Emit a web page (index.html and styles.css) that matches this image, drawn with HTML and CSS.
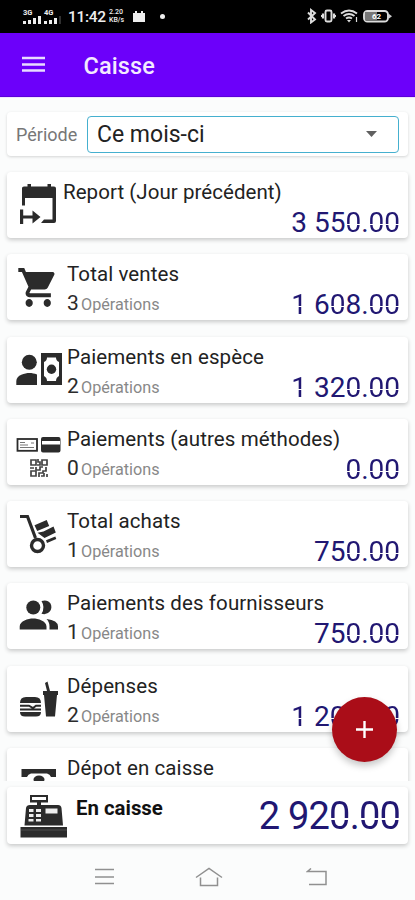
FILE: index.html
```html
<!DOCTYPE html>
<html lang="fr">
<head>
<meta charset="utf-8">
<title>Caisse</title>
<link rel="stylesheet" href="styles.css">
</head>
<body>
<div class="status">
  <div class="signals">
    <div class="signal"><span>3G</span><svg width="18" height="8" viewBox="0 0 18 8"><path d="M0 5h3v3H0zM5 4h3v4H5zM10 2h3v6h-3zM15 0h3v8h-3z"/></svg></div>
    <div class="signal"><span>4G</span><svg width="18" height="8" viewBox="0 0 18 8"><path d="M0 5h3v3H0zM5 4h3v4H5zM10 2h3v6h-3z"/><path d="M15 0h2v8h-2z" opacity=".2"/></svg></div>
  </div>
  <span class="clock">11:42</span>
  <div class="speed"><span>2.20</span><span>KB/s</span></div>
  <svg class="note" width="14" height="11" viewBox="0 0 14 11"><path d="M1 2h2V0h2v2h4V0h2v2h2v9H1z"/></svg>
  <i class="dot"></i>
  <svg class="sys" width="88" height="16" viewBox="0 0 88 16"><g fill="none" stroke="#ddd" stroke-width="1.900"><path d="M3 4.500l7 7-4 3V2l4 3-7 6.500"/><rect x="20.500" y="2.500" width="6" height="11" rx="1.500"/><path d="M18 5.500v5M29 5.500v5M16 8h1M30 8h1" stroke-width="2.200"/><path d="M36 5.500q8-6 16 0M38.500 8q5.500-4 11 0M41 10.500q3-2 6 0"/><path d="M51.500 9v5" stroke-width="1.200"/><rect x="59" y="3" width="24" height="10.500" rx="3.500"/></g><path d="M42 12h4l-2 2.500z" fill="#ddd"/><path d="M60 4h12v8.500H60z" fill="#777"/><path d="M84 6l3 2.200L84 10.500z" fill="#ccc"/><text x="67" y="11.400">62</text></svg>
</div>
<header class="bar">
  <svg width="23" height="17" viewBox="0 0 23 17"><path d="M0 2h23M0 8.500h23M0 14.500h23" stroke="#e8dcff" stroke-width="2.600"/></svg>
  <h1>Caisse</h1>
</header>
<main>
  <section class="card period">
    <label>Période</label>
    <div class="select"><span>Ce mois-ci</span><svg width="11" height="6" viewBox="0 0 11 6"><path d="M0 0h11L5.500 6z" fill="#606060"/></svg></div>
  </section>
  <div class="list">
    <section class="card row report">
      <svg class="icon" viewBox="0 0 60 66"><path d="M15 16q0-1.500 2-1.500h3.500V12H24v2.500h16.500V12H44v2.500h3q2 0 2 2V49q0 2-2 2H34l3-3.500h8.500V26H18v7.500h-3zM13 37.500h3.200v6H25.500V38.500l8 6.500-8 6.500v-5H16.200V52H13z"/></svg>
      <div class="body"><h2>Report (Jour précédent)</h2><p class="amount">3 55<i>0</i>.<i>00</i></p></div>
    </section>
    <section class="card row">
      <svg class="icon" viewBox="0 0 60 66"><path transform="translate(9.500 10.200) scale(1.810 1.940)" d="M7 18c-1.100 0-1.990.9-1.990 2S5.900 22 7 22s2-.9 2-2-.9-2-2-2zM1 2v2h2l3.600 7.590-1.350 2.450c-.16.28-.25.61-.25.960 0 1.100.9 2 2 2h12v-2H7.420c-.14 0-.25-.11-.25-.25l.03-.12.9-1.630h7.450c.75 0 1.410-.41 1.750-1.030l3.580-6.490C21.250 4.820 20.760 4 20 4H5.210l-.94-2H1zm16 16c-1.100 0-1.990.9-1.990 2s.89 2 1.990 2 2-.9 2-2-.9-2-2-2z"/></svg>
      <div class="body"><h2>Total ventes</h2><p class="ops"><b>3</b>Opérations</p><p class="amount"><i>1</i> 6<i>0</i>8.<i>00</i></p></div>
    </section>
    <section class="card row">
      <svg class="icon" viewBox="0 0 60 66"><circle cx="22.300" cy="25.300" r="7.500"/><path d="M9.300 48v-4c0-6 9-8 13-8 3 0 5 .5 7.700 1.500V48z"/><path fill-rule="evenodd" d="M34 16h21v32H34zM40 20.500q0 3-3 4.500v14q3 1.500 3 5h9q0-3.500 3-5V25q-3-1.500-3-4.500z"/><circle cx="44.500" cy="32.300" r="4.700"/></svg>
      <div class="body"><h2>Paiements en espèce</h2><p class="ops"><b>2</b>Opérations</p><p class="amount"><i>1</i> 32<i>0</i>.<i>00</i></p></div>
    </section>
    <section class="card row">
      <svg class="icon" viewBox="0 0 60 66"><rect x="10.500" y="20" width="19.500" height="11.800" fill="#fff" stroke="#2b2b2b" stroke-width="1.800"/><path d="M13 23.500h5M13 26h8M13 28.500h14M24 24h3" stroke="#777" stroke-width="1.100"/><path fill-rule="evenodd" d="M36 18h15.500q2 0 2 2v11.500q0 2-2 2H36q-2 0-2-2V20q0-2 2-2zM35 22v3.500h18V22z"/><g fill="none" stroke="#444" stroke-width="1.700"><path d="M24 41h5v5h-5zM35 41h5v5h-5zM24 52h5v5h-5z"/><path d="M31 40v3h2v3h-3M23 49h4M29 48v3h4v-3h3M39 48v4h-3v2h-4v4M34 57h3v-3M40 55v3"/></g></svg>
      <div class="body"><h2>Paiements (autres méthodes)</h2><p class="ops"><b>0</b>Opérations</p><p class="amount"><i>0</i>.<i>00</i></p></div>
    </section>
    <section class="card row">
      <svg class="icon" viewBox="0 0 60 66"><path d="M13 15.500h7.500L28.500 37" fill="none" stroke="#2b2b2b" stroke-width="3.200"/><circle cx="30.500" cy="44.500" r="6" fill="none" stroke="#2b2b2b" stroke-width="3.400"/><path d="M27.500 24.200L39.700 19l2.500 6-12 5zM30.500 31.700l6-1.300 10-5 2.300 6L37.500 37zM39 39.200l9.300-3.800 1 2.700-9.300 4z"/></svg>
      <div class="body"><h2>Total achats</h2><p class="ops"><b>1</b>Opérations</p><p class="amount">75<i>0</i>.<i>00</i></p></div>
    </section>
    <section class="card row">
      <svg class="icon" viewBox="0 0 60 66"><circle cx="26.300" cy="24.500" r="7"/><path d="M34.500 18q6-1.800 9 2.500 2 4-.5 7.800-3 4-8.500 2.500 4-6.300 0-12.800zM12.700 46.500v-3c0-5.500 8.500-8 13.400-8s13.400 2.500 13.400 8v3zM39.500 36q11.500 1.300 11.500 7.500v3h-8.500v-3q0-4.500-3-7.500z"/></svg>
      <div class="body"><h2>Paiements des fournisseurs</h2><p class="ops"><b>1</b>Opérations</p><p class="amount">75<i>0</i>.<i>00</i></p></div>
    </section>
    <section class="card row">
      <svg class="icon" viewBox="0 0 60 66"><path d="M13 37q0-6 6-6h9q6 0 6 6zM13 46h21q0 4.500-5 4.500H18q-5 0-5-4.500zM38 17l2.500-1.500L43 25h8v4h-1l-2 21.500h-9L37 29h-1v-4h4z"/><path d="M13 39.700h9l4 2.300 3-2.300h5M13 43.500h21" fill="none" stroke="#2b2b2b" stroke-width="2"/></svg>
      <div class="body"><h2>Dépenses</h2><p class="ops"><b>2</b>Opérations</p><p class="amount"><i>1</i> 2<i>00</i>.<i>00</i></p></div>
    </section>
    <section class="card row">
      <svg class="icon" viewBox="0 0 60 66"><path d="M14.500 21H49v8h-5q-1-3-4-3.500H24q-3 .5-4 3.500h-5.500z"/><ellipse cx="32" cy="31.500" rx="5.500" ry="4"/></svg>
      <div class="body"><h2>Dépot en caisse</h2></div>
    </section>
  </div>
  <section class="card total">
    <svg class="icon" viewBox="0 0 60 57"><path fill-rule="evenodd" d="M23 8h18v7.500h-7V18h17q3 0 3.500 3l1.500 17.500H17.500L19 21q.5-3 4-3h7v-2.500h-7zM25 10v3h14v-3zM13.500 40H60v10.500H13.500z"/><path d="M22 22h4.500v3H22zM29 22h5v3h-5zM22 27h4.500v3H22zM29 27h5v3h-5zM21.500 32h5v2.500h-5zM29 32h5v2.500h-5zM38.500 21.500h12v5h-12z" fill="#eee"/><path d="M14 43h46" stroke="#555" stroke-width=".8"/></svg>
    <h2>En caisse</h2>
    <p class="amount">2 92<i>0</i>.<i>00</i></p>
  </section>
</main>
<button class="fab" aria-label="Ajouter"><svg width="17" height="17" viewBox="0 0 17 17"><path d="M8.500 0v17M0 8.500h17" stroke="#fff" stroke-width="2.400"/></svg></button>
<nav class="nav">
  <svg width="20" height="18" viewBox="0 0 20 18"><path d="M0 1.500h19M0 9h19M0 15.500h19"/></svg>
  <svg width="28" height="20" viewBox="0 0 28 20"><path d="M1 10.500L14 1.500l13 9M5.500 10.500v8h17v-8"/></svg>
  <svg width="22" height="18" viewBox="0 0 22 18"><path d="M5 .5L1.500 3.500H20v13H3"/></svg>
</nav>
</body>
</html>
```
FILE: styles.css
```css
* { box-sizing: border-box; }
body {
  margin: 0;
  height: 900px;
  overflow: hidden;
  display: flex;
  flex-direction: column;
  background: #fbfcfc;
  color: #222;
  font-family: Roboto, "Liberation Sans", sans-serif;
}
h1, h2, p { margin: 0; font-weight: 400; }
svg { display: block; flex: none; }

.status {
  height: 32.500px;
  flex: none;
  display: flex;
  align-items: center;
  padding: 0 26px 0 23px;
  background: #000;
  color: #eee;
  fill: #eee;
}
.signals { display: flex; gap: 3px; }
.signal span { display: block; font-size: 7.500px; font-weight: 700; line-height: 7px; }
.clock { margin-left: 6px; width: 38px; font-size: 15.500px; font-weight: 500; letter-spacing: -.3px; padding-top: 2px; }
.speed { margin-left: 3px; width: 18px; font-size: 7px; line-height: 8.500px; font-weight: 500; }
.speed span { display: block; }
.note { margin-left: 5px; }
.dot { width: 5px; height: 5px; margin-left: 14px; border-radius: 50%; background: #eee; }
.sys { margin-left: auto; margin-right: -4px; }
.sys text { font-size: 8px; font-weight: 700; fill: #fff; }

.bar {
  height: 64.500px;
  flex: none;
  display: flex;
  align-items: center;
  gap: 39px;
  padding-left: 21.500px;
  background: #6c00fa;
  border-bottom: 1px solid #5a00d8;
}
.bar h1 { color: #f3eaff; font-size: 23.500px; font-weight: 500; padding-top: 3px; letter-spacing: .1px; }

main { height: 753px; flex: none; padding: 14px 7px 0; border-top: 1px solid #f0e2ff; }
.card {
  background: #fff;
  border-radius: 4px;
  box-shadow: 0 2px 4px rgba(0, 0, 0, .2);
}
.period { height: 44px; display: flex; align-items: center; padding: 0 9px; box-shadow: 0 1px 3px rgba(0, 0, 0, .16); }
.period label { width: 71px; font-size: 18px; color: #777; }
.select {
  flex: 1;
  height: 37px;
  display: flex;
  align-items: center;
  justify-content: space-between;
  padding: 0 21px 0 9px;
  border: 1.500px solid #45b0cf;
  border-radius: 4px;
  font-size: 23px;
}
.list {
  height: 625px;
  margin: 0 -7px;
  padding: 16px 7px 0;
  overflow: hidden;
  display: flex;
  flex-direction: column;
  gap: 16.300px;
}
.row { height: 66px; flex: none; display: flex; }
.icon { width: 60px; height: 66px; fill: #2b2b2b; }
.body {
  flex: 1;
  display: grid;
  grid-template: 36px 30px / auto 1fr;
  padding-right: 8px;
}
.body h2 { grid-column: 1 / 3; font-size: 20.500px; line-height: 24px; padding-top: 8px; letter-spacing: .1px; white-space: nowrap; }
.ops { font-size: 16.200px; line-height: 26px; color: #888; }
.ops b { display: inline-block; width: 14px; font-size: 21px; font-weight: 400; color: #2b2b2b; }
.amount {
  grid-column: 2;
  text-align: right;
  font-size: 28px;
  line-height: 29px;
  font-weight: 400;
  color: #211772;
  white-space: nowrap;
}
/* Display digits whose uprights are split at mid-height. */
.amount i {
  font-style: normal;
  color: transparent;
  background: linear-gradient(#211772 54%, #fff 54%, #fff 58%, #211772 58%);
  -webkit-background-clip: text;
  background-clip: text;
}
.report .body { margin-left: -4px; }
.report h2 { letter-spacing: .05px; }

.total { height: 57px; margin-top: 6px; display: flex; position: relative; padding-right: 8px; }
.total .icon { height: 57px; }
.total h2 { margin-left: 9px; padding-top: 9px; font-size: 20.400px; line-height: 24px; font-weight: 700; color: #111; }
.total .amount { margin-left: auto; font-size: 38px; line-height: 59px; letter-spacing: -.8px; }

.fab {
  position: absolute;
  left: 332px;
  top: 697px;
  width: 65px;
  height: 65px;
  display: flex;
  align-items: center;
  justify-content: center;
  border: 0;
  border-radius: 50%;
  background: #aa0d18;
  box-shadow: 0 4px 7px rgba(0, 0, 0, .22);
}
.nav {
  flex: 1;
  display: flex;
  align-items: center;
  gap: 80px;
  padding: 3px 0 0 95px;
  fill: none;
  stroke: #909090;
  stroke-width: 1.500;
}
.nav svg:last-child { margin-left: 3px; }
```
